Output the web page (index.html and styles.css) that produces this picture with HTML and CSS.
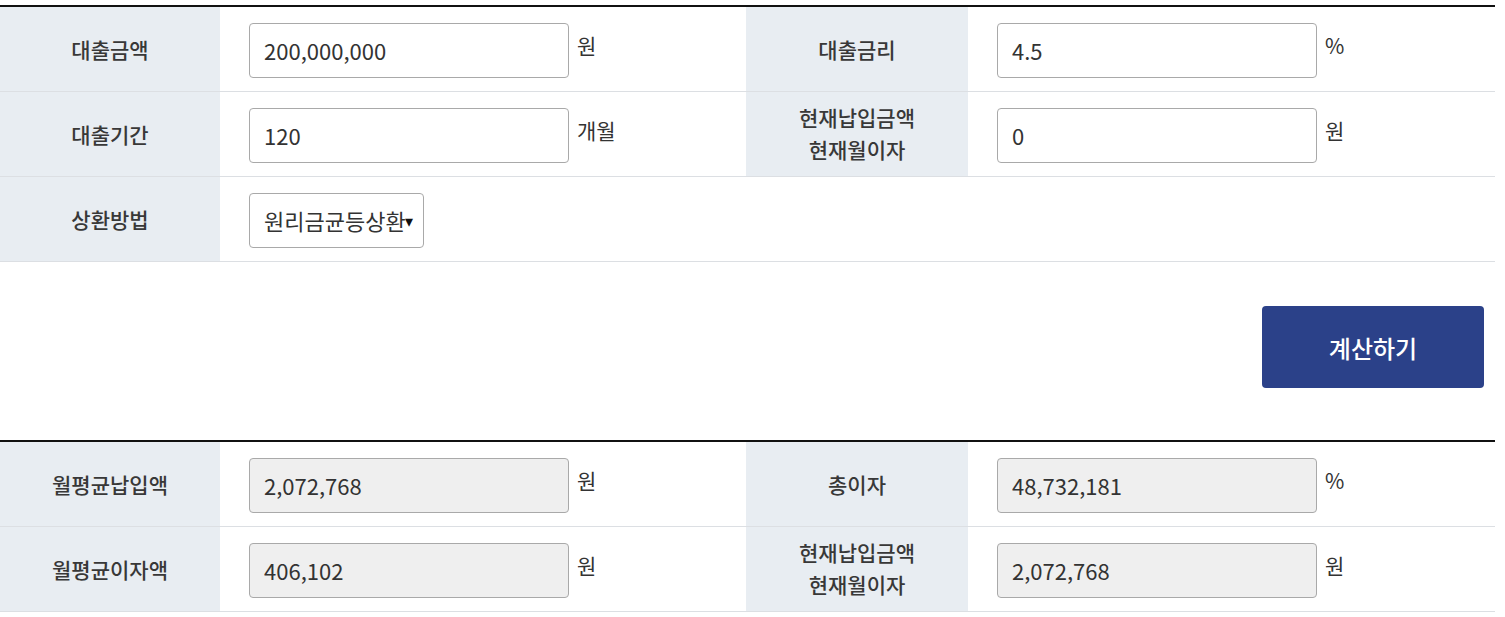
FILE: index.html
```html
<!DOCTYPE html>
<html lang="ko">
<head>
<meta charset="utf-8">
<title>대출 계산기</title>
<link rel="stylesheet" href="styles.css">
</head>
<body>
<div class="calc">
  <div class="table">
    <div class="row">
      <div class="label">대출금액</div>
      <div class="cell"><input class="field" type="text" value="200,000,000"><span class="unit">원</span></div>
      <div class="label">대출금리</div>
      <div class="cell"><input class="field" type="text" value="4.5"><span class="unit">%</span></div>
    </div>
    <div class="row">
      <div class="label">대출기간</div>
      <div class="cell"><input class="field" type="text" value="120"><span class="unit">개월</span></div>
      <div class="label two">현재납입금액<br>현재월이자</div>
      <div class="cell"><input class="field" type="text" value="0"><span class="unit">원</span></div>
    </div>
    <div class="row">
      <div class="label">상환방법</div>
      <div class="cell wide"><div class="select">원리금균등상환<span class="arrow">▾</span></div></div>
    </div>
  </div>

  <div class="actions">
    <button class="btn" type="button">계산하기</button>
  </div>

  <div class="table">
    <div class="row">
      <div class="label">월평균납입액</div>
      <div class="cell"><input class="field ro" type="text" value="2,072,768" readonly><span class="unit">원</span></div>
      <div class="label">총이자</div>
      <div class="cell"><input class="field ro" type="text" value="48,732,181" readonly><span class="unit">%</span></div>
    </div>
    <div class="row">
      <div class="label">월평균이자액</div>
      <div class="cell"><input class="field ro" type="text" value="406,102" readonly><span class="unit">원</span></div>
      <div class="label two">현재납입금액<br>현재월이자</div>
      <div class="cell"><input class="field ro" type="text" value="2,072,768" readonly><span class="unit">원</span></div>
    </div>
  </div>
</div>
</body>
</html>
```

FILE: styles.css
```css
* { box-sizing: border-box; }
html, body { margin: 0; padding: 0; background: #fff; }
body {
  font-family: "Noto Sans CJK KR", "Noto Sans", sans-serif;
  color: #333;
}
.calc {
  width: 1495px;
  padding-top: 5px;
}
.table {
  border-top: 2px solid #111;
}
.row {
  display: grid;
  grid-template-columns: 220px 526px 222px 1fr;
  height: 85px;
  border-bottom: 1px solid #dcdfe3;
}
.label {
  background: #e8edf2;
  display: flex;
  align-items: center;
  justify-content: center;
  text-align: center;
  font-size: 21px;
  font-weight: 500;
  color: #383838;
  line-height: 32px;
}
.label.two { padding-bottom: 3px; }
.cell {
  display: flex;
  align-items: center;
  padding-left: 29px;
  padding-top: 2px;
}
.cell.wide { grid-column: 2 / 5; }
.field {
  width: 320px;
  height: 55px;
  border: 1px solid #a9a9a9;
  border-radius: 4px;
  padding: 0 14px;
  font-family: "Noto Sans CJK KR", "Noto Sans", sans-serif;
  font-size: 22px;
  color: #333;
  background: #fff;
  outline: none;
}
.field.ro { background: #efefef; }
.unit {
  margin-left: 8px;
  font-size: 21px;
  color: #333;
  align-self: center;
  margin-bottom: 10px;
}
.select {
  width: 175px;
  height: 55px;
  border: 1px solid #a9a9a9;
  border-radius: 4px;
  padding-left: 14px;
  display: flex;
  align-items: center;
  font-size: 22px;
  color: #333;
  white-space: nowrap;
}
.arrow {
  font-size: 16px;
  color: #111;
  margin-left: -1px;
}
.actions {
  display: flex;
  justify-content: flex-end;
  padding: 44px 11px 52px 0;
}
.btn {
  width: 222px;
  height: 82px;
  background: #2b4189;
  border: none;
  border-radius: 4px;
  color: #fff;
  font-family: "Noto Sans CJK KR", "Noto Sans", sans-serif;
  font-size: 24px;
  font-weight: 500;
}
```
